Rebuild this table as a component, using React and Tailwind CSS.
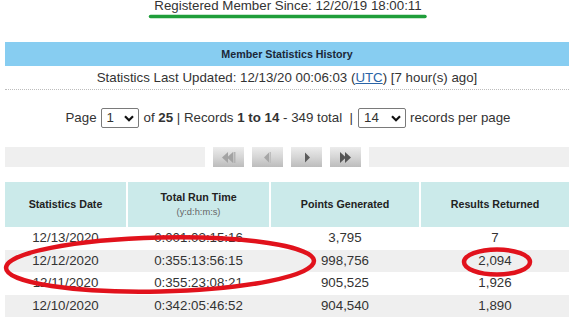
import React from 'react'

const rows = [
  ['12/13/2020', '0:001:03:15:16', '3,795', '7'],
  ['12/12/2020', '0:355:13:56:15', '998,756', '2,094'],
  ['12/11/2020', '0:355:23:08:21', '905,525', '1,926'],
  ['12/10/2020', '0:342:05:46:52', '904,540', '1,890'],
]

function Chevron() {
  return (
    <svg width="10" height="7" viewBox="0 0 10 7" className="shrink-0">
      <path d="M1 1.2 L5 5.2 L9 1.2" fill="none" stroke="#111" strokeWidth="2.2" />
    </svg>
  )
}

function FakeSelect({ value, width }) {
  return (
    <div
      className={`flex h-[20px] items-center justify-between rounded-[2px] border border-[#7a7a7a] bg-white pl-[5px] pr-[4px] ${width}`}
    >
      <span>{value}</span>
      <Chevron />
    </div>
  )
}

function NavButton({ children }) {
  return (
    <div className="flex h-[20px] w-[31px] items-center justify-center bg-gradient-to-b from-[#ececec] via-[#d6d6d6] to-[#bcbcbc]">
      {children}
    </div>
  )
}

export default function App() {
  return (
    <div className="relative h-[324px] w-[576px] overflow-hidden bg-white font-['Liberation_Sans',Arial,sans-serif] text-[13.3px] text-[#333]">
      {/* 会員登録日 */}
      <div className="-mt-[2px] h-[15px] text-center leading-[15px]">
        Registered Member Since: 12/20/19 18:00:11
      </div>

      {/* 見出しバー */}
      <div className="ml-[5px] mt-[29px] flex h-[24px] w-[564px] items-center justify-center bg-[#87cdf1] text-[10.7px] font-bold text-[#1b2738]">
        Member Statistics History
      </div>
      <div className="ml-[5px] flex h-[24px] w-[564px] items-center justify-center border-b border-dotted border-[#bdbdbd]">
        Statistics Last Updated: 12/13/20 00:06:03 (
        <span className="text-[#2a64a6] underline">UTC</span>) [7 hour(s) ago]
      </div>

      {/* ページ送り */}
      <div className="mt-[18px] flex h-[20px] items-center justify-center whitespace-pre">
        <span>Page</span>
        <div className="ml-[4px] mr-[5px]">
          <FakeSelect value="1" width="w-[38px]" />
        </div>
        <span>
          of <b>25</b> | Records <b>1 to 14</b> - 349 total  |
        </span>
        <div className="ml-[5px] mr-[4px]">
          <FakeSelect value="14" width="w-[48px]" />
        </div>
        <span>records per page</span>
      </div>

      {/* ナビゲーション */}
      <div className="ml-[5px] mt-[19px] flex h-[20px] w-[564px] gap-[8px]">
        <div className="flex-1 bg-[#efefef]" />
        <NavButton>
          <svg width="14" height="11" viewBox="0 0 14 11">
            <path d="M0 5.5 L6 0 L6 11 Z" fill="#a3a3a3" />
            <path d="M5 5.5 L11 0 L11 11 Z" fill="#a3a3a3" />
            <rect x="11.5" y="0" width="2" height="11" fill="#b3b3b3" />
          </svg>
        </NavButton>
        <NavButton>
          <svg width="8" height="11" viewBox="0 0 8 11">
            <path d="M0 5.5 L5 0.5 L5 10.5 Z" fill="#a6a6a6" />
            <rect x="5.5" y="0" width="1.5" height="11" fill="#bdbdbd" />
          </svg>
        </NavButton>
        <NavButton>
          <svg width="8" height="11" viewBox="0 0 8 11">
            <path d="M2 0.5 L7 5.5 L2 10.5 Z" fill="#5c5c5c" />
          </svg>
        </NavButton>
        <NavButton>
          <svg width="13" height="11" viewBox="0 0 13 11">
            <path d="M1 0 L7 5.5 L1 11 Z" fill="#555" />
            <path d="M6 0 L12 5.5 L6 11 Z" fill="#555" />
          </svg>
        </NavButton>
        <div className="flex-1 bg-[#efefef]" />
      </div>

      {/* 統計テーブル */}
      <div className="ml-[5px] mt-[15px] w-[564px]">
        <div className="grid h-[45px] grid-cols-[121px_141px_148px_148px] gap-x-[2px] text-[10.7px] font-bold text-[#222]">
          <div className="flex items-center justify-center bg-[#cbeaea]">Statistics Date</div>
          <div className="flex flex-col items-center justify-center bg-[#cbeaea] leading-[15px]">
            <span>Total Run Time</span>
            <span className="text-[9.3px] font-normal text-[#666]">(y:d:h:m:s)</span>
          </div>
          <div className="flex items-center justify-center bg-[#cbeaea]">Points Generated</div>
          <div className="flex items-center justify-center bg-[#cbeaea]">Results Returned</div>
        </div>
        {rows.map((r, i) => (
          <div
            key={r[0]}
            className={`grid h-[22.5px] grid-cols-[121px_141px_148px_148px] gap-x-[2px] ${i % 2 === 1 ? 'bg-[#efefef]' : 'bg-white'}`}
          >
            {r.map((c, j) => (
              <div key={j} className="flex items-center justify-center">
                {c}
              </div>
            ))}
          </div>
        ))}
      </div>

      {/* 手書きの注釈 */}
      <svg className="pointer-events-none absolute left-0 top-0" width="576" height="324" viewBox="0 0 576 324">
        <line x1="150.5" y1="16.5" x2="425" y2="16.5" stroke="#1f9e3a" strokeWidth="3.5" strokeLinecap="round" />
        <ellipse
          cx="160"
          cy="264.5"
          rx="154"
          ry="27"
          fill="none"
          stroke="#e1121c"
          strokeWidth="4.5"
          transform="rotate(-1.3 160 264.5)"
        />
        <ellipse cx="497" cy="262" rx="33" ry="12.5" fill="none" stroke="#e1121c" strokeWidth="4.5" />
      </svg>
    </div>
  )
}
